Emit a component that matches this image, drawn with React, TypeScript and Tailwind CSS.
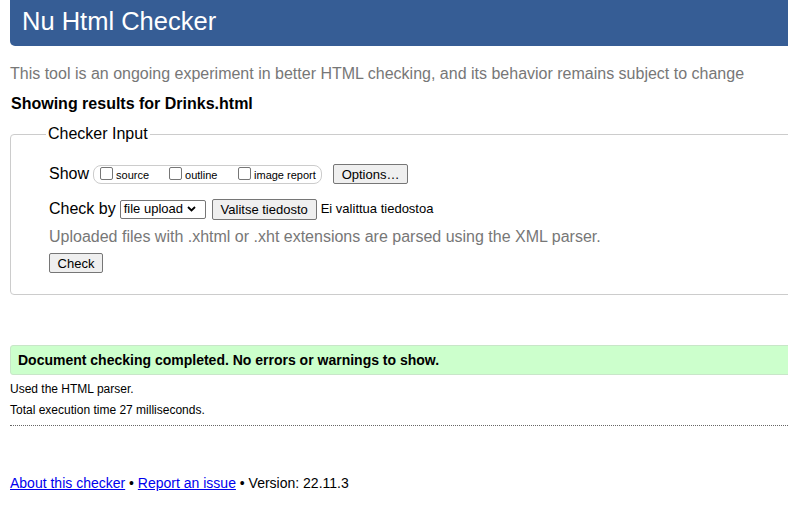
import React from "react";

function Btn({ children, className = "" }: { children: React.ReactNode; className?: string }) {
  return (
    <span
      className={
        "inline-flex items-center justify-center border border-[#767676] rounded-[2px] bg-[#efefef] text-[13px] text-black leading-none " +
        className
      }
    >
      {children}
    </span>
  );
}

function Box() {
  return <span className="inline-block w-[13px] h-[13px] border border-[#767676] rounded-[2px] bg-white mr-[3px] relative top-[-1px]" />;
}

export default function App() {
  return (
    <div className="w-[788px] h-[513px] overflow-hidden bg-white" style={{ fontFamily: '"Liberation Sans", Arial, sans-serif' }}>
      <div className="w-[1000px] pl-[10px]">
        <div className="h-[46px] bg-[#365d95] rounded-bl-[5px] flex items-center pl-[12px]">
          <span className="text-white text-[25.5px] leading-none relative top-[-1px]">Nu Html Checker</span>
        </div>
        <div className="mt-[19px] text-[16px] leading-[18px] text-[#777]">
          This tool is an ongoing experiment in better HTML checking, and its behavior remains subject to change
        </div>
        <div className="mt-[12px] text-[16px] leading-[18px] font-bold text-black pl-[1px]">Showing results for Drinks.html</div>

        <div className="relative mt-[21px] border border-[#ccc] rounded-[4px] h-[161px] pl-[38px] pt-[29px]">
          <div className="absolute left-[35px] top-[-11px] bg-white px-[2px] text-[16px] leading-[20px] text-black">
            Checker Input
          </div>
          <div className="flex items-center h-[20px]">
            <span className="text-[16px] text-black mr-[4px]">Show</span>
            <span className="inline-flex items-center h-[19px] w-[229px] border border-[#ccc] rounded-[8px] pl-[6px] text-[11px] text-black">
              <span className="inline-flex items-center w-[69px]"><Box /><span className="relative top-[1px]">source</span></span>
              <span className="inline-flex items-center w-[69px]"><Box /><span className="relative top-[1px]">outline</span></span>
              <span className="inline-flex items-center"><Box /><span className="relative top-[1px]">image report</span></span>
            </span>
            <Btn className="ml-[11px] w-[75px] h-[20px]">Options…</Btn>
          </div>
          <div className="flex items-center h-[20px] mt-[15px]">
            <span className="text-[16px] text-black mr-[4px]">Check by</span>
            <span className="inline-flex items-center h-[19px] w-[86px] border border-[#767676] rounded-[2px] text-[13px] text-black pl-[3px]">
              file upload
              <svg width="9" height="6" viewBox="0 0 9 6" className="ml-[4px]">
                <path d="M1 1l3.5 3.5L8 1" stroke="#000" strokeWidth="1.8" fill="none" />
              </svg>
            </span>
            <Btn className="ml-[6px] w-[105px] h-[21px]">Valitse tiedosto</Btn>
            <span className="ml-[4px] text-[13px] text-black">Ei valittua tiedostoa</span>
          </div>
          <div className="mt-[9px] text-[16px] leading-[18px] text-[#777]">
            Uploaded files with .xhtml or .xht extensions are parsed using the XML parser.
          </div>
          <Btn className="mt-[7px] w-[54px] h-[20px]">Check</Btn>
        </div>

        <div className="mt-[50px] h-[30px] bg-[#ccffcc] border border-[#c8e6c8] rounded-[3px] flex items-center pl-[7px] text-[14px] font-bold text-black">
          Document checking completed. No errors or warnings to show.
        </div>
        <div className="mt-[7px] text-[12px] leading-[14px] text-black">Used the HTML parser.</div>
        <div className="mt-[7px] text-[12px] leading-[14px] text-black">Total execution time 27 milliseconds.</div>
        <div className="mt-[8px] border-t border-dotted border-[#666]" />
        <div className="mt-[49px] text-[14px] leading-[16px] text-black">
          <a className="text-[#0000ee] underline">About this checker</a> • <a className="text-[#0000ee] underline">Report an issue</a> • Version: 22.11.3
        </div>
      </div>
    </div>
  );
}
